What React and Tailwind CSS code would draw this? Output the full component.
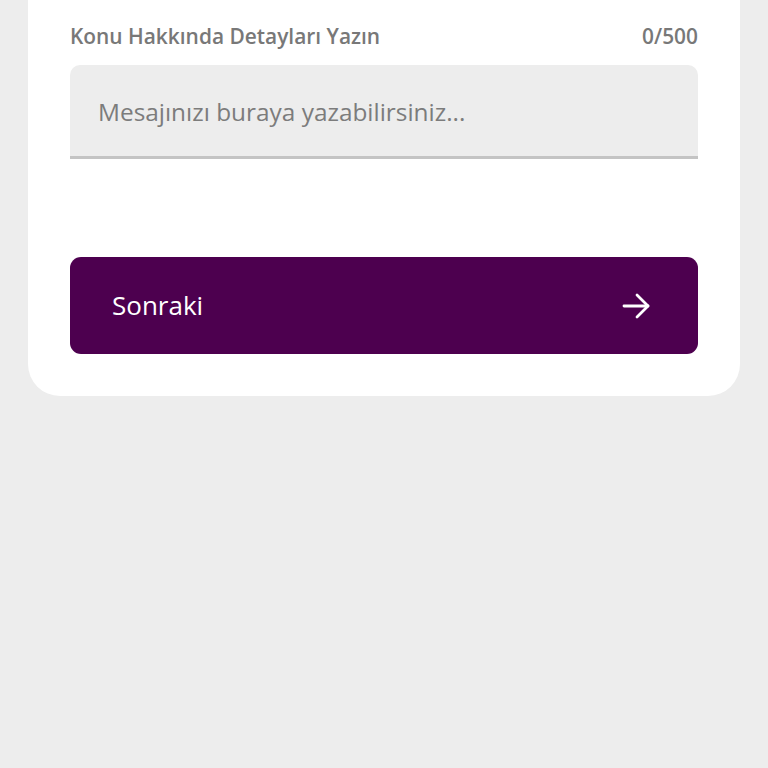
import React, { useState } from 'react';

export default function App() {
  const [message, setMessage] = useState('');

  return (
    <div className="min-h-[768px] bg-[#ededed] px-[28px] font-['Open_Sans',sans-serif]">
      <div className="bg-white rounded-b-[32px] px-[42px] pt-[22px] pb-[42px]">
        {/* Label row */}
        <div className="flex items-center justify-between h-[29px] text-[20.9px] font-semibold text-[#787878]">
          <span>Konu Hakkında Detayları Yazın</span>
          <span>{message.length}/500</span>
        </div>

        {/* Message input */}
        <div className="mt-[14px] h-[94px] bg-[#ededed] rounded-t-[10px] border-b-[3px] border-[#c4c4c4] flex items-center px-[28px] pt-[4px]">
          <input
            value={message}
            maxLength={500}
            onChange={(e) => setMessage(e.target.value)}
            placeholder="Mesajınızı buraya yazabilirsiniz..."
            className="w-full bg-transparent outline-none text-[24.4px] text-[#333] placeholder:text-[#7c7c7c]"
          />
        </div>

        {/* Next button */}
        <button className="mt-[98px] w-full h-[97px] bg-[#4d004f] rounded-[11px] flex items-center justify-between pl-[42px] pr-[48px] text-white">
          <span className="text-[26px]">Sonraki</span>
          <svg width="28" height="28" viewBox="0 0 28 28" fill="none" stroke="currentColor" strokeWidth="2.8" strokeLinecap="round" strokeLinejoin="round">
            <path d="M2 14h24" />
            <path d="M15 3l11 11-11 11" />
          </svg>
        </button>
      </div>
    </div>
  );
}
